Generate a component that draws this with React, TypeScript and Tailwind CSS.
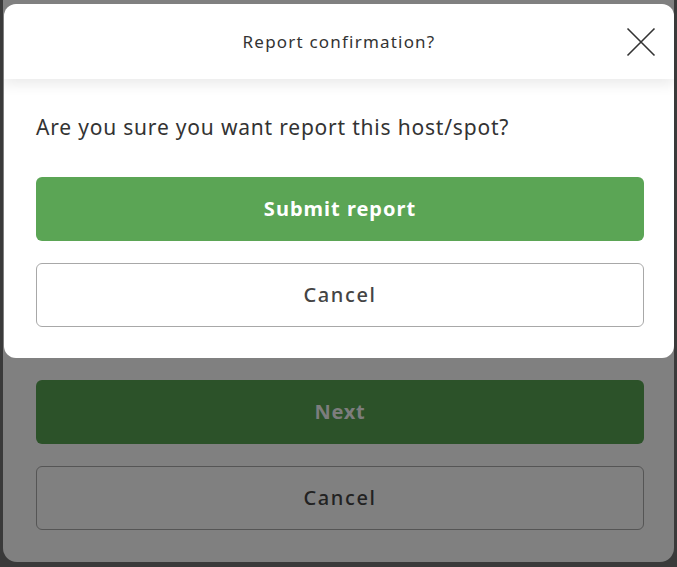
import * as React from 'react'

function CloseIcon() {
  return (
    <svg width="30" height="30" viewBox="0 0 30 30" fill="none" stroke="#333333" strokeWidth="1.6">
      <path d="M1.5 1.5 L28.5 28.5 M28.5 1.5 L1.5 28.5" />
    </svg>
  )
}

export default function App() {
  const font = { fontFamily: '"Noto Sans", "Open Sans", sans-serif' }
  return (
    <div className="relative w-[677px] h-[567px] overflow-hidden bg-[#3a3a3a]" style={font}>
      {/* page behind the overlay */}
      <div className="ml-[3px] mr-[3px] h-[562px] bg-[#808080] rounded-b-[14px] pl-[33px] pr-[30px] pt-[380px]">
        <div className="h-16 rounded-md bg-[#2c5229] flex items-center justify-center text-[20px] tracking-[0.75px] font-bold text-[#7d7d7d]">
          Next
        </div>
        <div className="mt-[22px] h-16 rounded-md border border-[#555555] flex items-center justify-center text-[20px] tracking-[1.6px] font-medium text-[#222222]">
          Cancel
        </div>
      </div>

      {/* dialog */}
      <div className="absolute left-[4px] top-[4px] w-[670px] h-[354px] bg-white rounded-[12px] overflow-hidden">
        <div className="relative h-[75px] flex items-center justify-center shadow-[0_6px_12px_rgba(0,0,0,0.08)]">
          <span className="text-[17px] tracking-[1.2px] text-[#333333]">Report confirmation?</span>
          <button className="absolute right-[18px] top-[23px]">
            <CloseIcon />
          </button>
        </div>
        <div className="pl-[32px] pr-[30px]">
          <p className="mt-[34px] text-[21px] tracking-[0.8px] leading-[28px] text-[#333333]">
            Are you sure you want report this host/spot?
          </p>
          <button className="mt-[36px] w-full h-16 rounded-md bg-[#5ba555] text-white text-[20px] tracking-[1px] font-bold">
            Submit report
          </button>
          <button className="mt-[22px] w-full h-16 rounded-md border border-[#a8a8a8] text-[#444444] text-[20px] tracking-[1.6px] font-medium">
            Cancel
          </button>
        </div>
      </div>
    </div>
  )
}
